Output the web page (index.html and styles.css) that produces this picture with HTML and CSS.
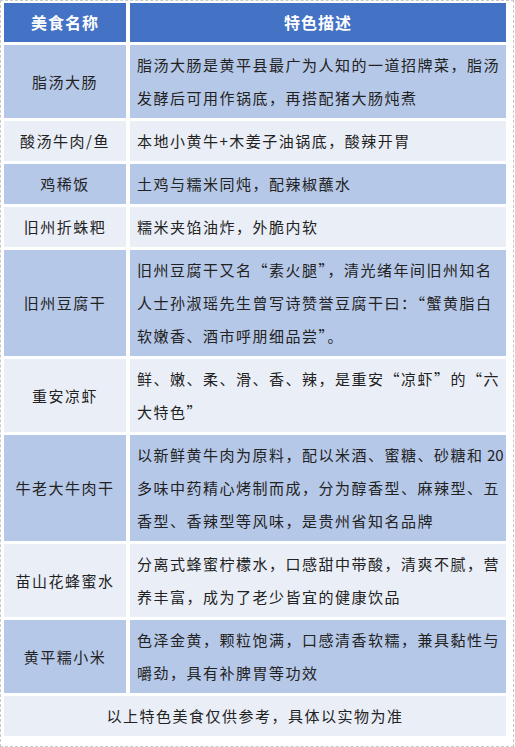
FILE: index.html
```html
<!DOCTYPE html>
<html lang="zh-CN">
<head>
<meta charset="utf-8">
<title>黄平特色美食</title>
<link rel="stylesheet" href="styles.css">
</head>
<body>
<div class="frame">
  <table class="food">
    <colgroup><col class="col-name"><col class="col-desc"></colgroup>
    <thead>
      <tr><th class="name">美食名称</th><th class="desc">特色描述</th></tr>
    </thead>
    <tbody>
      <tr class="band"><td class="name">脂汤大肠</td><td class="desc">脂汤大肠是黄平县最广为人知的一道招牌菜，脂汤<br>发酵后可用作锅底，再搭配猪大肠炖煮</td></tr>
      <tr class="light"><td class="name">酸汤牛肉/鱼</td><td class="desc">本地小黄牛+木姜子油锅底，酸辣开胃</td></tr>
      <tr class="band"><td class="name">鸡稀饭</td><td class="desc">土鸡与糯米同炖，配辣椒蘸水</td></tr>
      <tr class="light"><td class="name">旧州折蛛粑</td><td class="desc">糯米夹馅油炸，外脆内软</td></tr>
      <tr class="band"><td class="name">旧州豆腐干</td><td class="desc">旧州豆腐干又名“素火腿”，清光绪年间旧州知名<br>人士孙淑瑶先生曾写诗赞誉豆腐干曰：“蟹黄脂白<br>软嫩香、酒市呼朋细品尝”。</td></tr>
      <tr class="light"><td class="name">重安凉虾</td><td class="desc">鲜、嫩、柔、滑、香、辣，是重安“凉虾”的“六<br>大特色”</td></tr>
      <tr class="band"><td class="name">牛老大牛肉干</td><td class="desc">以新鲜黄牛肉为原料，配以米酒、蜜糖、砂糖和<span class="num"> 20</span><br>多味中药精心烤制而成，分为醇香型、麻辣型、五<br>香型、香辣型等风味，是贵州省知名品牌</td></tr>
      <tr class="light"><td class="name">苗山花蜂蜜水</td><td class="desc">分离式蜂蜜柠檬水，口感甜中带酸，清爽不腻，营<br>养丰富，成为了老少皆宜的健康饮品</td></tr>
      <tr class="band"><td class="name">黄平糯小米</td><td class="desc">色泽金黄，颗粒饱满，口感清香软糯，兼具黏性与<br>嚼劲，具有补脾胃等功效</td></tr>
      <tr class="light"><td class="note" colspan="2">以上特色美食仅供参考，具体以实物为准</td></tr>
    </tbody>
  </table>
</div>
</body>
</html>
```
FILE: styles.css
```css
html, body {
  margin: 0;
  padding: 0;
  background: #ffffff;
}

.frame {
  box-sizing: border-box;
  width: 514px;
  height: 747px;
  border: 1px dashed #c9c9c9;
  background: #ffffff;
  overflow: hidden;
}

.food {
  table-layout: fixed;
  width: 510px;
  border-collapse: separate;
  border-spacing: 4px 3.9px;
  margin: -1px 0 0 -1px;
  font-family: "Noto Sans CJK SC", "Noto Sans", sans-serif;
  font-size: 15px;
  color: #222222;
}

.col-name {
  width: 122px;
}

.col-desc {
  width: 376px;
}

.food th,
.food td {
  padding: 3px 7px 4px 7px;
  line-height: 33px;
  letter-spacing: 1.5px;
  vertical-align: middle;
}

.food th {
  background: #4472c4;
  color: #ffffff;
  font-weight: 700;
  font-size: 16px;
  letter-spacing: 1px;
  text-align: center;
  padding-top: 3px;
  padding-bottom: 3px;
}

.food .name {
  text-align: center;
}

.food td.desc {
  text-align: left;
  white-space: nowrap;
}

.food .num {
  letter-spacing: 0;
}

.food th.desc {
  text-align: center;
}

.food td.note {
  text-align: center;
}

.band td {
  background: #b6c8e8;
}

.light td {
  background: #eaeef7;
}
```
